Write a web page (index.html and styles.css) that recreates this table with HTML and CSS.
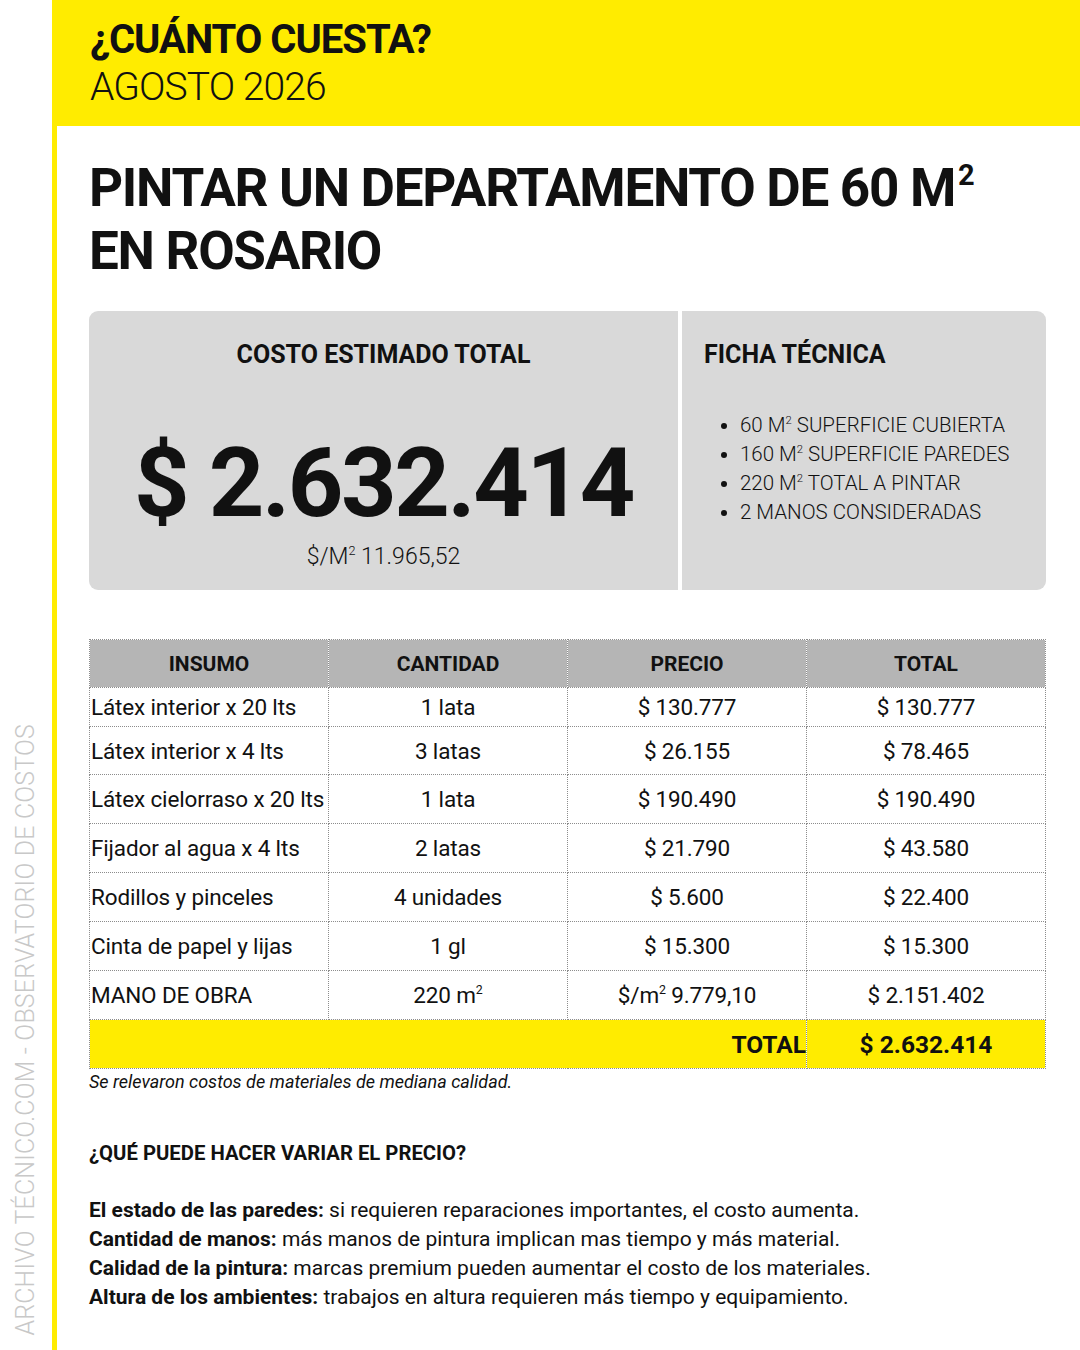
FILE: index.html
```html
<!DOCTYPE html>
<html lang="es">
<head>
<meta charset="utf-8">
<title>¿Cuánto cuesta? Pintar un departamento</title>
<link rel="stylesheet" href="styles.css">
</head>
<body>
<div class="page">
  <aside class="side">
    <span class="side-text">ARCHIVO TÉCNICO.COM - OBSERVATORIO DE COSTOS</span>
  </aside>
  <main class="main">
    <header class="header">
      <div class="kicker">¿CUÁNTO CUESTA?</div>
      <div class="date">AGOSTO 2026</div>
    </header>
    <div class="content">
      <h1 class="title">PINTAR UN DEPARTAMENTO DE 60 M<sup>2</sup><br>EN ROSARIO</h1>

      <section class="cards">
        <div class="card card-total">
          <div class="card-title">COSTO ESTIMADO TOTAL</div>
          <div class="big">$ 2.632.414</div>
          <div class="per">$/M<sup>2</sup> 11.965,52</div>
        </div>
        <div class="card card-ficha">
          <div class="card-title">FICHA TÉCNICA</div>
          <ul class="ficha">
            <li>60 M<sup>2</sup> SUPERFICIE CUBIERTA</li>
            <li>160 M<sup>2</sup> SUPERFICIE PAREDES</li>
            <li>220 M<sup>2</sup> TOTAL A PINTAR</li>
            <li>2 MANOS CONSIDERADAS</li>
          </ul>
        </div>
      </section>

      <table class="costs">
        <thead>
          <tr><th>INSUMO</th><th>CANTIDAD</th><th>PRECIO</th><th>TOTAL</th></tr>
        </thead>
        <tbody>
          <tr class="r-first"><td class="name">Látex interior x 20 lts</td><td>1 lata</td><td>$ 130.777</td><td>$ 130.777</td></tr>
          <tr class="r-second"><td class="name">Látex interior x 4 lts</td><td>3 latas</td><td>$ 26.155</td><td>$ 78.465</td></tr>
          <tr><td class="name">Látex cielorraso x 20 lts</td><td>1 lata</td><td>$ 190.490</td><td>$ 190.490</td></tr>
          <tr><td class="name">Fijador al agua x 4 lts</td><td>2 latas</td><td>$ 21.790</td><td>$ 43.580</td></tr>
          <tr><td class="name">Rodillos y pinceles</td><td>4 unidades</td><td>$ 5.600</td><td>$ 22.400</td></tr>
          <tr><td class="name">Cinta de papel y lijas</td><td>1 gl</td><td>$ 15.300</td><td>$ 15.300</td></tr>
          <tr><td class="name">MANO DE OBRA</td><td>220 m<sup>2</sup></td><td>$/m<sup>2</sup> 9.779,10</td><td>$ 2.151.402</td></tr>
          <tr class="r-total"><td colspan="3" class="total-label">TOTAL</td><td class="total-value">$ 2.632.414</td></tr>
        </tbody>
      </table>
      <p class="note">Se relevaron costos de materiales de mediana calidad.</p>

      <h2 class="sub">¿QUÉ PUEDE HACER VARIAR EL PRECIO?</h2>
      <div class="factors">
        <p><b>El estado de las paredes:</b> si requieren reparaciones importantes, el costo aumenta.</p>
        <p><b>Cantidad de manos:</b> más manos de pintura implican mas tiempo y más material.</p>
        <p><b>Calidad de la pintura:</b> marcas premium pueden aumentar el costo de los materiales.</p>
        <p><b>Altura de los ambientes:</b> trabajos en altura requieren más tiempo y equipamiento.</p>
      </div>
    </div>
  </main>
</div>
</body>
</html>
```

FILE: styles.css
```css
* { box-sizing: border-box; }
html, body { margin: 0; padding: 0; }
body {
  width: 1080px;
  height: 1350px;
  background: #ffffff;
  color: #111111;
  font-family: Roboto, "Liberation Sans", sans-serif;
  overflow: hidden;
}
.page {
  display: flex;
  width: 1080px;
  height: 1350px;
}
.side {
  width: 52px;
  flex: none;
  display: flex;
  flex-direction: column;
  justify-content: flex-end;
  align-items: center;
  padding-bottom: 14px;
}
.side-text {
  writing-mode: vertical-rl;
  transform: rotate(180deg);
  font-size: 24.9px;
  font-weight: 300;
  color: #c8c8c8;
  letter-spacing: 0.2px;
  white-space: nowrap;
  line-height: 1;
}
.main {
  flex: 1;
  border-left: 5px solid #ffec00;
  display: flex;
  flex-direction: column;
}
.header {
  background: #ffec00;
  height: 126px;
  padding: 16px 0 0 33px;
}
.kicker {
  font-size: 40px;
  font-weight: 700;
  line-height: 48px;
  letter-spacing: -1px;
}
.date {
  font-size: 39px;
  font-weight: 300;
  line-height: 46px;
  letter-spacing: -0.9px;
}
.content {
  padding: 0 34px 0 32px;
}
.title {
  margin: 31px 0 0 0;
  font-size: 53px;
  font-weight: 700;
  line-height: 63px;
  letter-spacing: -1.3px;
}
.title sup {
  font-size: 29px;
  vertical-align: 0;
  position: relative;
  top: -21px;
  margin-left: 3px;
}
sup {
  font-size: 0.55em;
  line-height: 0;
  vertical-align: 0.75em;
}
.cards {
  display: flex;
  gap: 4px;
  margin-top: 28px;
  height: 279px;
}
.card {
  background: #d9d9d9;
}
.card-total {
  width: 589px;
  border-radius: 9px 0 0 9px;
  display: flex;
  flex-direction: column;
  align-items: center;
  padding-top: 29px;
}
.card-ficha {
  flex: 1;
  border-radius: 0 9px 9px 0;
  padding: 29px 0 0 22px;
}
.card-title {
  font-size: 25px;
  font-weight: 700;
  line-height: 30px;
}
.big {
  margin-top: 55px;
  font-size: 97px;
  font-weight: 700;
  line-height: 116px;
  letter-spacing: -2.4px;
}
.per {
  margin-top: 2px;
  font-size: 23px;
  font-weight: 300;
  line-height: 28px;
}
.ficha {
  margin: 41px 0 0 0;
  padding: 0 0 0 36px;
  font-size: 20.5px;
  font-weight: 300;
  line-height: 29px;
}
.ficha sup { font-size: 0.55em; }
.costs {
  margin-top: 49px;
  width: 957px;
  border-collapse: collapse;
  table-layout: fixed;
  font-size: 22.5px;
}
.costs th, .costs td {
  border: 1px dotted #8c8c8c;
  width: 25%;
  text-align: center;
  padding: 0 1px;
  white-space: nowrap;
  overflow: hidden;
}
.costs th {
  background: #b5b5b5;
  height: 48px;
  font-weight: 700;
  font-size: 21px;
}
.costs td {
  height: 49px;
  font-weight: 400;
  letter-spacing: -0.15px;
}
.costs tr.r-first td { height: 39px; }
.costs tr.r-second td { height: 48px; }
.costs td.name { text-align: left; }
.costs td sup { font-size: 0.55em; }
.costs tr.r-total td {
  background: #ffec00;
  font-weight: 700;
  font-size: 24.5px;
  letter-spacing: 0;
}
.costs td.total-label {
  text-align: right;
  padding-right: 0;
}
.note {
  margin: 2px 0 0 0;
  font-size: 18px;
  font-style: italic;
  line-height: 22px;
}
.sub {
  margin: 48px 0 0 0;
  font-size: 20.3px;
  font-weight: 700;
  line-height: 24px;
}
.factors {
  margin-top: 31px;
  font-size: 21px;
  line-height: 29px;
}
.factors p { margin: 0; }
.factors b { font-weight: 700; }
```
